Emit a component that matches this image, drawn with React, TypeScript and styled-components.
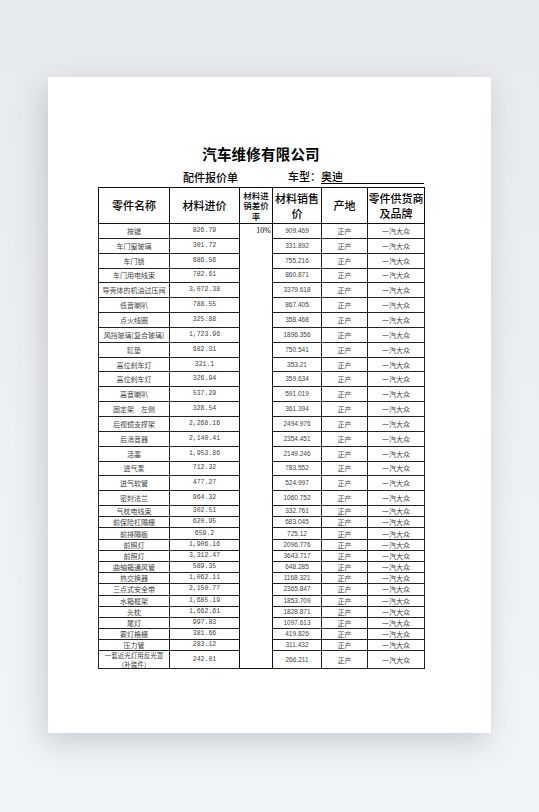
import React from 'react';
import styled, { createGlobalStyle } from 'styled-components';

type PartRow = {
  name: string;
  cost: string;
  price: string;
  size: 'tall' | 'short' | 'double';
};

const names = [
  '按键', '车门窗玻璃', '车门锁', '车门用电线束', '导壳体的机油过压阀', '低音喇叭', '点火线圈',
  '风挡玻璃(复合玻璃)', '缸垫', '高位刹车灯', '高位刹车灯', '高音喇叭', '固定架　左侧', '后视镜支撑架',
  '后消音器', '活塞', '进气泵', '进气软管', '密封法兰', '气枕电线束', '前保险杠隔栅', '前排隔板',
  '前照灯', '前照灯', '曲轴箱通风管', '热交换器', '三点式安全带', '水箱框架', '头枕', '尾灯',
  '雾灯格栅', '压力管', '一套近光灯用反光罩（补装件）',
];

const costs = [
  '826.79', '301.72', '686.56', '782.61', '3,072.38', '788.55', '325.88', '1,723.96', '682.31',
  '321.1', '326.94', '537.29', '328.54', '2,268.16', '2,140.41', '1,953.86', '712.32', '477.27',
  '964.32', '302.51', '620.95', '659.2', '1,906.16', '3,312.47', '589.35', '1,062.11', '2,150.77',
  '1,685.19', '1,662.61', '997.83', '381.66', '283.12', '242.01',
];

const prices = [
  '909.469', '331.892', '755.216', '860.871', '3379.618', '867.405', '358.468', '1896.356', '750.541',
  '353.21', '359.634', '591.019', '361.394', '2494.976', '2354.451', '2149.246', '783.552', '524.997',
  '1060.752', '332.761', '683.045', '725.12', '2096.776', '3643.717', '648.285', '1168.321', '2365.847',
  '1853.709', '1828.871', '1097.613', '419.826', '311.432', '266.211',
];

const rows: PartRow[] = names.map((name, i) => ({
  name,
  cost: costs[i],
  price: prices[i],
  size: i < 19 ? 'tall' : i < 32 ? 'short' : 'double',
}));

const rowHeights = { tall: 14.85, short: 11.2, double: 17 };

const GlobalStyle = createGlobalStyle`
  html, body {
    margin: 0;
    padding: 0;
  }
  body {
    background: linear-gradient(180deg, #e7eaed 0%, #eef1f4 60%, #f2f5f8 100%);
    font-family: "Noto Sans CJK SC", "Noto Sans", sans-serif;
    color: #000;
  }
`;

const Page = styled.div`
  min-height: 812px;
  padding: 77px 0 0 48px;
  box-sizing: border-box;
`;

const Sheet = styled.div`
  width: 443px;
  height: 656px;
  background: #fff;
  box-shadow: -4px 10px 28px rgba(60, 70, 80, 0.22);
  padding: 69px 0 0 50px;
  box-sizing: border-box;
`;

const Content = styled.div`
  width: 326px;
`;

const Title = styled.div`
  text-align: center;
  font-size: 14.5px;
  line-height: 15px;
  font-weight: 700;
  letter-spacing: 0.2px;
`;

const SubRow = styled.div`
  display: flex;
  align-items: flex-end;
  margin-top: 9px;
  padding-left: 85px;
  font-size: 11px;
  line-height: 13px;
  font-weight: 500;
`;

const Model = styled.div`
  display: flex;
  flex: 1;
  margin-left: 50px;
`;

const ModelValue = styled.span`
  flex: 1;
  border-bottom: 1px solid #000;
`;

const Table = styled.table`
  margin-top: 3px;
  width: 326px;
  border-collapse: collapse;
  table-layout: fixed;
  border: 1.5px solid #111;
`;

const HeadCell = styled.th<{ $small?: boolean }>`
  height: 35px;
  padding: 0;
  border: 1px solid #111;
  font-weight: 500;
  font-size: ${(p) => (p.$small ? '8.5px' : '11px')};
  line-height: ${(p) => (p.$small ? '10.5px' : '15px')};
  text-align: center;
  vertical-align: middle;
`;

const Cell = styled.td<{ $mono?: boolean; $sans?: boolean }>`
  padding: 0 1px;
  border: 1px solid #222;
  text-align: center;
  vertical-align: middle;
  font-size: ${(p) => (p.$mono || p.$sans ? '6.5px' : '7px')};
  line-height: 8px;
  color: #444;
  white-space: nowrap;
  overflow: hidden;
  font-family: ${(p) =>
    p.$mono
      ? '"Liberation Mono", monospace'
      : p.$sans
      ? '"Liberation Sans", Arial, sans-serif'
      : '"Noto Sans CJK SC", sans-serif'};
`;

const NameCell = styled(Cell)`
  white-space: normal;
  font-size: 6.5px;
  line-height: 8.5px;
`;

const RateCell = styled.td`
  padding: 2px 1px 0 0;
  border: 1px solid #111;
  text-align: right;
  vertical-align: top;
  font-family: "Liberation Serif", serif;
  font-size: 8px;
  line-height: 9px;
  color: #000;
`;

const Row = styled.tr<{ $h: number }>`
  height: ${(p) => p.$h}px;
`;

const App = () => {
  return (
    <>
      <GlobalStyle />
      <Page>
        <Sheet>
          <Content>
            <Title>汽车维修有限公司</Title>
            <SubRow>
              <span>配件报价单</span>
              <Model>
                <span>车型：</span>
                <ModelValue>奥迪</ModelValue>
              </Model>
            </SubRow>
            <Table>
              <colgroup>
                <col style={{ width: 71 }} />
                <col style={{ width: 70 }} />
                <col style={{ width: 33 }} />
                <col style={{ width: 49 }} />
                <col style={{ width: 46 }} />
                <col style={{ width: 57 }} />
              </colgroup>
              <thead>
                <tr>
                  <HeadCell>零件名称</HeadCell>
                  <HeadCell>材料进价</HeadCell>
                  <HeadCell $small>
                    材料进
                    <br />
                    销差价
                    <br />
                    率
                  </HeadCell>
                  <HeadCell>
                    材料销售
                    <br />
                    价
                  </HeadCell>
                  <HeadCell>产地</HeadCell>
                  <HeadCell>
                    零件供货商
                    <br />
                    及品牌
                  </HeadCell>
                </tr>
              </thead>
              <tbody>
                {rows.map((row, i) => (
                  <Row key={i} $h={rowHeights[row.size]}>
                    {row.size === 'double' ? (
                      <NameCell>
                        一套近光灯用反光罩
                        <br />
                        （补装件）
                      </NameCell>
                    ) : (
                      <Cell>{row.name}</Cell>
                    )}
                    <Cell $mono>{row.cost}</Cell>
                    {i === 0 && <RateCell rowSpan={rows.length}>10%</RateCell>}
                    <Cell $sans>{row.price}</Cell>
                    <Cell>正产</Cell>
                    <Cell>一汽大众</Cell>
                  </Row>
                ))}
              </tbody>
            </Table>
          </Content>
        </Sheet>
      </Page>
    </>
  );
};

export default App;
